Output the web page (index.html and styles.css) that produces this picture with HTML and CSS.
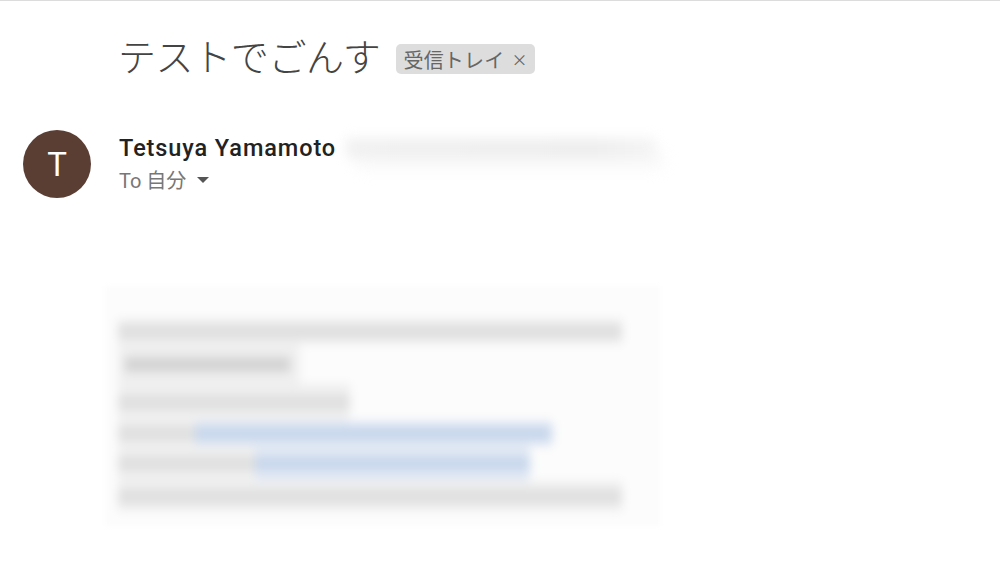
FILE: index.html
```html
<!DOCTYPE html>
<html lang="ja">
<head>
    <meta charset="utf-8">
    <meta name="viewport" content="width=device-width, initial-scale=1.0">
    <title>テストでごんす</title>
    <link rel="stylesheet" href="styles.css">
</head>
<body>
    <div class="subject-row">
        <h1 class="subject">テストでごんす</h1>
        <span class="label">受信トレイ <span class="label-x">×</span></span>
    </div>

    <div class="sender-row">
        <div class="avatar">T</div>
        <div class="sender-info">
            <div class="sender-line">
                <span class="sender-name">Tetsuya Yamamoto</span>
                <span class="sender-mail"></span>
            </div>
            <div class="to-line">
                <span>To 自分</span>
                <svg class="to-arrow" width="12" height="6" viewBox="0 0 12 6"><path d="M0 0h12L6 6z" fill="#555"/></svg>
            </div>
        </div>
    </div>

    <!-- blurred mail body -->
    <div class="mail-body">
        <div class="mail-lines">
            <div class="line-row row-a"><div class="seg grey w504"><div class="bar grey-bar"></div></div></div>
            <div class="line-row row-b"><div class="seg grey w182"><div class="bar dark-bar"></div></div></div>
            <div class="line-row row-c"><div class="seg grey w232"><div class="bar grey-bar"></div></div></div>
            <div class="line-row row-d"><div class="seg grey w77"><div class="bar grey-bar"></div></div><div class="seg blue w357"><div class="bar blue-bar"></div></div></div>
            <div class="line-row row-e"><div class="seg grey w137"><div class="bar grey-bar"></div></div><div class="seg blue w275"><div class="bar blue-bar"></div></div></div>
            <div class="line-row row-f"><div class="seg grey w504"><div class="bar grey-bar"></div></div></div>
        </div>
    </div>
</body>
</html>
```

FILE: styles.css
```css
body {
    margin: 0;
    height: 563px;
    overflow: hidden;
    background: #fff;
    border-top: 1px solid #dcdcdc;
    box-sizing: border-box;
    font-family: Roboto, "Noto Sans CJK JP", sans-serif;
}

.subject-row {
    display: flex;
    align-items: center;
    gap: 16px;
    padding: 29px 0 0 118px;
    height: 50px;
}

.subject {
    margin: 0;
    font-size: 38px;
    font-weight: 300;
    color: #444;
    font-family: "Noto Sans CJK JP", sans-serif;
    line-height: 50px;
    letter-spacing: -0.4px;
}

.label {
    display: flex;
    align-items: center;
    gap: 7px;
    height: 30px;
    margin-top: 8px;
    padding: 0 7px 0 7px;
    background: #ddd;
    border-radius: 5px;
    font-family: "Noto Sans CJK JP", sans-serif;
    font-size: 20px;
    letter-spacing: 0.2px;
    color: #666;
}

.label-x {
    font-size: 16px;
}

.sender-row {
    display: flex;
    align-items: center;
    gap: 28px;
    padding: 50px 0 0 23px;
}

.avatar {
    display: flex;
    align-items: center;
    justify-content: center;
    width: 68px;
    height: 68px;
    border-radius: 50%;
    background: #5a3d33;
    color: #fff;
    font-size: 33px;
}

.sender-line {
    display: flex;
    align-items: center;
    gap: 10px;
}

.sender-name {
    font-size: 23.5px;
    font-weight: 500;
    color: #222;
    letter-spacing: 0.9px;
}

.sender-mail {
    width: 310px;
    height: 20px;
    background: linear-gradient(to right, #f1f1f1, #eeeeee 80%, #f5f5f5);
    box-shadow: 8px 12px 12px #f9f9f9;
    filter: blur(6px);
}

.to-line {
    display: flex;
    align-items: center;
    gap: 11px;
    margin-top: 3px;
    font-size: 20px;
    color: #777;
}

.mail-body {
    margin: 88px 0 0 105px;
    width: 555px;
    height: 240px;
    padding: 33px 0 0 13px;
    box-sizing: border-box;
    background: #fcfcfc;
    filter: blur(2px);
}

.mail-lines {
    display: flex;
    flex-direction: column;
    filter: blur(4px);
}

.line-row {
    display: flex;
}

.row-a { height: 25px; }
.row-b { height: 40px; }
.row-c { height: 37px; }
.row-d { height: 25px; }
.row-e { height: 35px; }
.row-f { height: 30px; }

.seg {
    display: flex;
    align-items: center;
    height: 100%;
}

.grey { background: #efefef; }
.blue { background: #e2e9f4; }

.bar {
    flex: 1;
    height: 15px;
}

.grey-bar { background: #e0e0e0; }
.dark-bar {
    margin: 0 10px 0 7px;
    background: #d4d4d4;
}
.blue-bar { background: #c9d8ec; }

.w77 { width: 77px; }
.w137 { width: 137px; }
.w182 { width: 182px; }
.w232 { width: 232px; }
.w275 { width: 275px; }
.w357 { width: 357px; }
.w504 { width: 504px; }
```
